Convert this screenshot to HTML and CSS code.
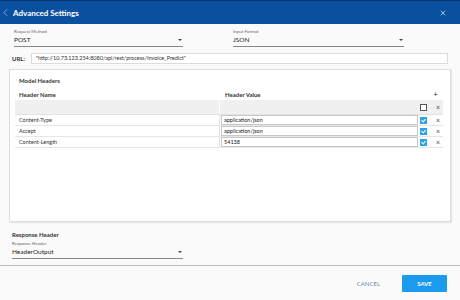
FILE: index.html
```html
<!doctype html>
<html lang="en">
  <head>
    <meta charset="UTF-8">
    <title>Advanced Settings</title>
    <link rel="stylesheet" href="styles.css">
  </head>
  <body>
    <!-- Title bar -->
    <div class="titlebar">
      <div class="title-left">
        <svg class="back-icon" viewBox="0 0 6 10" width="5" height="9">
          <path d="M5 1 L1 5 L5 9" fill="none" stroke="#8fb4e6" stroke-width="1"/>
        </svg>
        <span class="title">Advanced Settings</span>
      </div>
      <svg class="close-icon" viewBox="0 0 8 8" width="6" height="6">
        <path d="M1 1 L7 7 M7 1 L1 7" stroke="#cfe0f7" stroke-width="1"/>
      </svg>
    </div>

    <div class="content">
      <div class="selects">
        <div class="select-field method">
          <span class="field-label">Request Method</span>
          <div class="field-value"><span>POST</span><svg class="caret" viewBox="0 0 4 2" width="4" height="2"><path d="M0 0 H4 L2 2 Z" fill="#444"/></svg></div>
        </div>
        <div class="select-field format">
          <span class="field-label">Input Format</span>
          <div class="field-value"><span>JSON</span><svg class="caret" viewBox="0 0 4 2" width="4" height="2"><path d="M0 0 H4 L2 2 Z" fill="#444"/></svg></div>
        </div>
      </div>

      <div class="url-row">
        <span class="url-label">URL:</span>
        <div class="url-input">"http://10.73.123.254:8080/api/rest/process/Invoice_Predict"</div>
      </div>

      <!-- Model headers panel -->
      <div class="panel">
        <div class="panel-title">Model Headers</div>
        <div class="table-head">
          <span class="col-name">Header Name</span>
          <span class="col-value">Header Value</span>
          <span class="add">+</span>
        </div>
        <div class="table">
          <div class="row new-row">
            <div class="cell-name"></div>
            <div class="cell-value"></div>
            <span class="check"></span>
            <span class="remove">&#215;</span>
          </div>
          <div class="row">
            <div class="cell-name">Content-Type</div>
            <div class="cell-value"><div class="value-input">application/json</div></div>
            <span class="check on"></span>
            <span class="remove">&#215;</span>
          </div>
          <div class="row">
            <div class="cell-name">Accept</div>
            <div class="cell-value"><div class="value-input">application/json</div></div>
            <span class="check on"></span>
            <span class="remove">&#215;</span>
          </div>
          <div class="row">
            <div class="cell-name">Content-Length</div>
            <div class="cell-value"><div class="value-input">54138</div></div>
            <span class="check on"></span>
            <span class="remove">&#215;</span>
          </div>
        </div>
      </div>

      <div class="response">
        <div class="response-title">Response Header</div>
        <div class="select-field output">
          <span class="field-label">Response Header</span>
          <div class="field-value"><span>HeaderOutput</span><svg class="caret" viewBox="0 0 4 2" width="4" height="2"><path d="M0 0 H4 L2 2 Z" fill="#444"/></svg></div>
        </div>
      </div>
    </div>

    <div class="footer">
      <button class="btn-cancel">CANCEL</button>
      <button class="btn-save">SAVE</button>
    </div>
  </body>
</html>
```

FILE: styles.css
```css
:root {
  --blue: #0b4f9f;
  --save: #1c9bee;
  --line: #dcdcdc;
  --text: #222;
}
body {
  margin: 0;
  width: 460px;
  height: 300px;
  overflow: hidden;
  background: #fafafa;
  font-family: Lato, 'Open Sans', sans-serif;
  color: var(--text);
  display: flex;
  flex-direction: column;
}
/* Title bar */
.titlebar {
  height: 23px;
  background: var(--blue);
  border-top: 1px solid #06336b;
  display: flex;
  align-items: center;
  justify-content: space-between;
  padding: 0 14px 0 3px;
}
.title-left {
  display: flex;
  align-items: center;
  gap: 5px;
}
.back-icon {
  display: block;
}
.title {
  color: #fff;
  font-size: 8px;
  font-weight: 700;
}
.close-icon {
  display: block;
}
.content {
  flex: 1;
  padding: 0 9px;
  display: flex;
  flex-direction: column;
}
/* Select fields */
.selects {
  display: flex;
  gap: 50px;
  padding: 5px 0 0 5px;
}
.select-field {
  display: flex;
  flex-direction: column;
}
.select-field.method {
  width: 169px;
}
.select-field.format {
  width: 171px;
}
.field-label {
  font-size: 4.5px;
  color: #666;
  line-height: 6px;
}
.field-value {
  display: flex;
  justify-content: space-between;
  align-items: center;
  font-size: 6.5px;
  line-height: 9px;
  padding-bottom: 2px;
  border-bottom: 1px solid #888;
}
.caret {
  display: block;
  margin-right: 1px;
}
/* URL */
.url-row {
  display: flex;
  align-items: center;
  gap: 6px;
  margin-top: 6px;
  padding-left: 3px;
}
.url-label {
  font-size: 6px;
  font-weight: 700;
  color: #333;
}
.url-input {
  flex: 1;
  height: 9px;
  margin-right: 3px;
  border: 1px solid var(--line);
  background: #fff;
  font-size: 5.5px;
  line-height: 9px;
  padding-left: 4px;
  color: #333;
}
/* Model headers panel */
.panel {
  margin-top: 5px;
  height: 151px;
  background: #fff;
  border: 1px solid var(--line);
  box-shadow: 1px 1px 1px rgba(0, 0, 0, 0.08);
  padding: 0 7px 0 5px;
}
.panel-title {
  font-size: 6px;
  font-weight: 700;
  color: #333;
  padding: 7px 0 0 4px;
  line-height: 8px;
}
.table-head {
  display: flex;
  align-items: center;
  font-size: 6px;
  font-weight: 700;
  color: #333;
  padding: 4px 5px 0 4px;
  height: 10px;
}
.col-name {
  width: 206px;
}
.col-value {
  flex: 1;
}
.add {
  font-size: 8px;
  font-weight: 400;
  color: #333;
}
.table {
  margin-top: 1px;
}
.row {
  display: flex;
  align-items: center;
  height: 10px;
  border-bottom: 1px solid #e6e6e6;
  font-size: 5.5px;
  color: #333;
}
.row.new-row {
  height: 14px;
  background: #f0f0f0;
  border-bottom: 1px solid #e2e2e2;
}
.cell-name {
  width: 200px;
  padding-left: 4px;
  height: 100%;
  display: flex;
  align-items: center;
  border-right: 1px solid #e0e0e0;
}
.new-row .cell-name {
  border-right-color: #fff;
}
.cell-value {
  flex: 1;
  height: 100%;
  display: flex;
  align-items: center;
}
.value-input {
  flex: 1;
  height: 8px;
  line-height: 8px;
  border: 1px solid #c8c8c8;
  background: #fff;
  padding-left: 2px;
  color: #222;
  margin-left: 1px;
}
.check {
  width: 5px;
  height: 5px;
  margin: 0 0 0 2px;
  border: 1px solid #555;
  background: #fff;
}
.check.on {
  border-color: #2aa1e8;
  background: #2aa1e8;
  position: relative;
}
.check.on::after {
  content: "";
  position: absolute;
  left: 1px;
  top: 0;
  width: 2px;
  height: 3px;
  border: solid #fff;
  border-width: 0 1px 1px 0;
  transform: rotate(40deg);
}
.remove {
  width: 10px;
  margin-left: 6px;
  text-align: center;
  font-size: 7px;
  color: #444;
}
/* Response header */
.response {
  padding: 8px 0 0 3px;
}
.response-title {
  font-size: 6px;
  font-weight: 700;
  color: #333;
  line-height: 9px;
}
.select-field.output {
  width: 171px;
  margin-top: 2px;
}
.output .field-value {
  font-size: 6.5px;
}
/* Footer */
.footer {
  height: 34px;
  border-top: 1px solid #bbb;
  display: flex;
  align-items: center;
  justify-content: flex-end;
  gap: 22px;
  padding: 0 13px 0 0;
}
.btn-cancel {
  background: none;
  border: none;
  font-family: inherit;
  font-size: 6px;
  color: #6d88b3;
  padding: 0;
}
.btn-save {
  width: 45px;
  height: 17px;
  border: none;
  border-radius: 1px;
  background: var(--save);
  color: #fff;
  font-family: inherit;
  font-size: 6px;
  font-weight: 700;
}
```
